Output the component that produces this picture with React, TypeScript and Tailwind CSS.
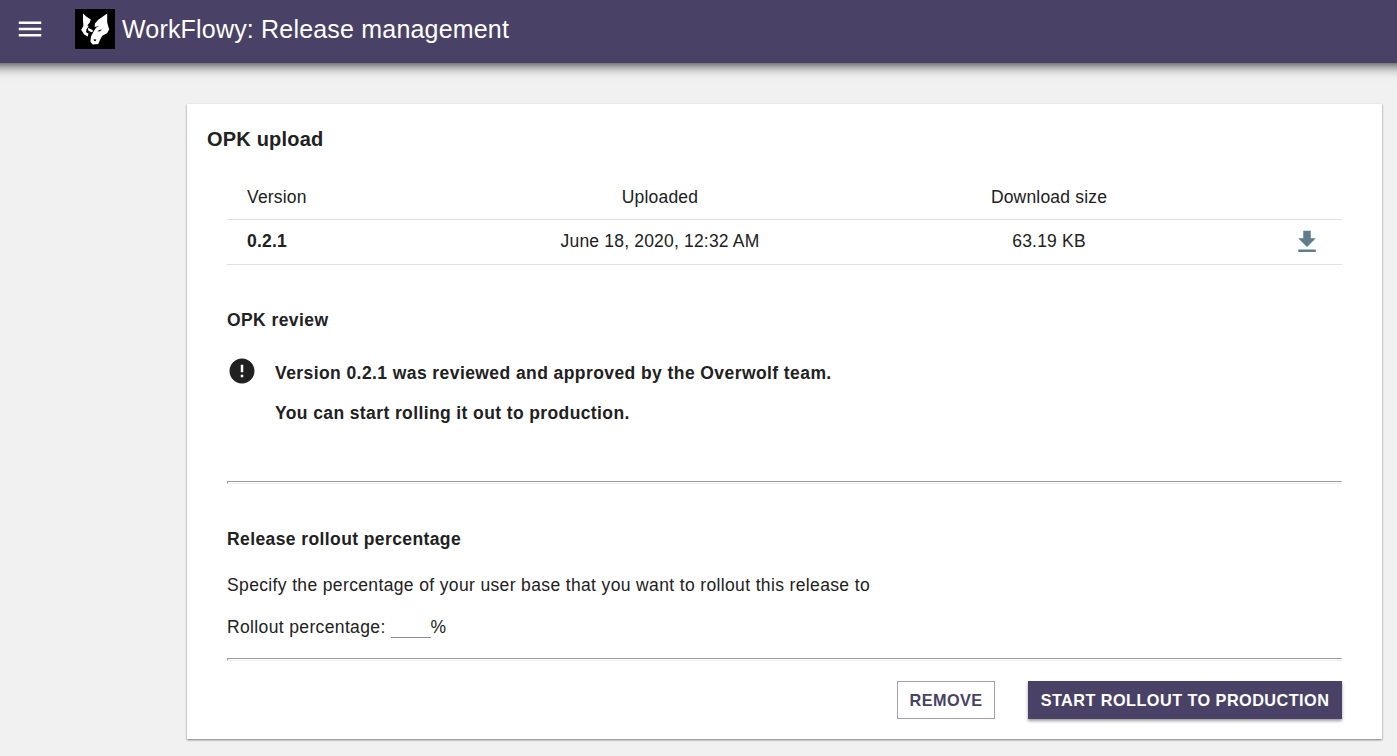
function WolfLogo() {
  return (
    <svg viewBox="0 0 40 40" className="block h-10 w-10 shrink-0 bg-black" aria-hidden="true">
      <g fill="#fff">
        <path d="M8 4.6 L11.6 7.8 L15.8 10.4 L14.8 13.4 L12.4 16.2 L13.6 17.2 L11.4 20.6 L11 23.2 L13.4 24.6 L12.8 27.4 L9.2 25.4 L6.2 20.8 L8.4 17 L8 11.5 Z" />
        <path d="M12.8 18.8 L16.2 20.2 L18.4 22 L16.6 23.2 L13.4 21.8 Z" />
        <path d="M32.2 4.6 L32.2 13.6 L34.2 20.6 L32 24.2 L27.2 26.8 L25.2 30.4 L23.2 35 L17.6 35.4 L15.4 32.8 L16 27.4 L18.6 22.6 L21 18.8 L24.4 17 L19.6 18 L20 14.6 L23.2 10.8 Z" />
      </g>
      <path d="M22.4 22.4 L24.2 21 L27 20.4 L25.2 22.2 Z M18.6 30.2 L21.4 30.4 L20.4 32.2 L19 31.8 Z" fill="#000" />
    </svg>
  );
}

function Rule({ className }: { className: string }) {
  return <hr className={`h-[3px] border border-t-[#9a9a9a] border-r-[#eee] border-b-[#eee] border-l-[#9a9a9a] ${className}`} />;
}

const columns = "grid grid-cols-[240px_386px_392px_97px] items-center border-b border-[#e0e0e0] text-center";

export default function App() {
  return (
    <div className="flex h-[756px] w-full flex-col overflow-hidden bg-[#f1f1f1] font-['Liberation_Sans',Arial,sans-serif] text-[17.5px] leading-[25px] tracking-[0.1875px] text-[#212121]">
      <header className="z-10 -mx-5 flex h-[63px] shrink-0 items-center bg-[#494266] pb-[5px] pl-[35px] text-white shadow-[0_0_12px_2px_rgba(0,0,0,0.8)]">
        <button type="button" aria-label="Menu" className="block">
          <svg viewBox="0 0 24 24" className="block h-[30px] w-[30px]" fill="currentColor">
            <path d="M3 18h18v-2H3v2zm0-5h18v-2H3v2zm0-7v2h18V6H3z" />
          </svg>
        </button>
        <div className="ml-[30px] flex items-center">
          <WolfLogo />
          <h1 className="ml-[7px] text-[25px] leading-10 tracking-[0.1875px]">WorkFlowy: Release management</h1>
        </div>
      </header>

      <main className="mt-[41px] ml-[187px] h-[635px] w-[1195px] shrink-0 bg-white px-5 pt-[23px] shadow-[0_1px_2px_rgba(0,0,0,0.5)]">
        <h2 className="text-[20px] leading-[25px] font-bold tracking-[0.2px]">OPK upload</h2>
        <div className="px-5">
          <div className="pt-[23px]">
            <div className={`${columns} h-[45px]`}>
              <span className="pl-5 text-left">Version</span>
              <span>Uploaded</span>
              <span>Download size</span>
            </div>
            <div className={`${columns} h-[45px]`}>
              <span className="pb-[2px] pl-5 text-left font-bold">0.2.1</span>
              <span className="pb-[2px]">June 18, 2020, 12:32 AM</span>
              <span className="pb-[2px]">63.19 KB</span>
              <svg viewBox="0 0 24 24" className="ml-[47px] h-[30px] w-[30px]" fill="#607d8b">
                <path d="M19 9h-4V3H9v6H5l7 7 7-7zM5 18v2h14v-2H5z" />
              </svg>
            </div>
          </div>

          <section className="pt-[43px] font-bold tracking-[0.42px]">
            <h3>OPK review</h3>
            <div className="mt-[23px] flex">
              <svg viewBox="0 0 24 24" className="h-[30px] w-[30px]" fill="currentColor">
                <path d="M12 2C6.48 2 2 6.48 2 12s4.48 10 10 10 10-4.48 10-10S17.52 2 12 2zm1 15h-2v-2h2v2zm0-4h-2V7h2v6z" />
              </svg>
              <div className="ml-[18px] pt-[5px]">
                <p>Version 0.2.1 was reviewed and approved by the Overwolf team.</p>
                <p className="mt-[15px] tracking-[0.39px]">You can start rolling it out to production.</p>
              </div>
            </div>
          </section>

          <Rule className="mt-[55px]" />

          <section className="pt-[43px] tracking-[0.36px]">
            <h3 className="font-bold tracking-[0.4px]">Release rollout percentage</h3>
            <p className="mt-[21px]">Specify the percentage of your user base that you want to rollout this release to</p>
            <label className="mt-[17px] flex">
              <span>Rollout percentage:</span>
              <input aria-label="Rollout percentage" className="ml-[5px] h-[23px] w-10 border-b border-[#8c8c8c] outline-none" />
              <span>%</span>
            </label>
          </section>

          <Rule className="mt-[18px]" />

          <div className="mt-5 flex justify-end gap-[33px] text-[16.25px] font-bold">
            <button type="button" className="h-[38px] w-[98px] border border-[#a4a0b2] tracking-[0.4px] text-[#494266]">REMOVE</button>
            <button type="button" className="h-[38px] w-[314px] bg-[#494266] tracking-[0.45px] text-white shadow-[0_2px_3px_rgba(0,0,0,0.4)]">START ROLLOUT TO PRODUCTION</button>
          </div>
        </div>
      </main>
    </div>
  );
}
